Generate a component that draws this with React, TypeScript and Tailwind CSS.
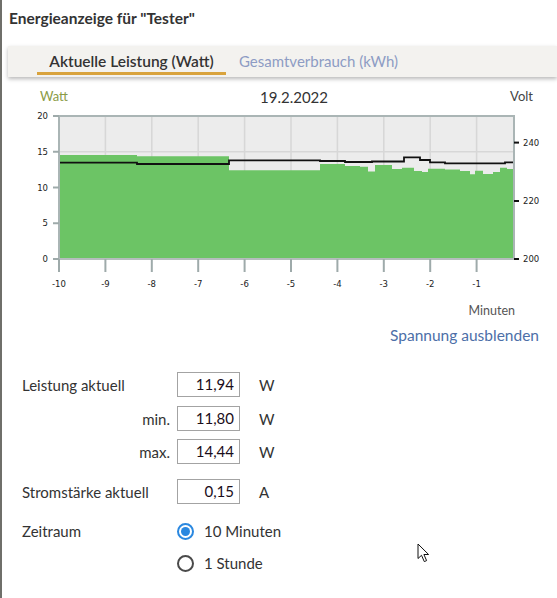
import React from "react";

const L = 59;
const R = 514;
const T = 116;
const B = 259;
const STEP = 46.4;

// power bars: [x0, x1, top]
const power: [number, number, number][] = [
  [59, 137, 155],
  [137, 229, 156.3],
  [229, 320, 170.3],
  [320, 345, 164],
  [345, 360, 166],
  [360, 368, 166.7],
  [368, 375, 171.5],
  [375, 392, 165],
  [392, 402, 169],
  [402, 414, 167.7],
  [414, 422, 171],
  [422, 428, 172],
  [428, 445, 168.7],
  [445, 460, 169.5],
  [460, 470, 171],
  [470, 475, 174.3],
  [475, 483, 170.7],
  [483, 493, 174],
  [493, 500, 172],
  [500, 507, 167.7],
  [507, 514, 169],
];

// voltage steps: [x0, x1, y]
const volt: [number, number, number][] = [
  [59, 137, 162.7],
  [137, 229, 164],
  [229, 320, 160.3],
  [320, 345, 161],
  [345, 372, 162],
  [372, 404, 161.5],
  [404, 420, 157.3],
  [420, 430, 160],
  [430, 445, 162.3],
  [445, 505, 163.3],
  [505, 514, 162.4],
];

function areaPath() {
  let d = `M${L},${B}`;
  for (const [x0, x1, y] of power) d += ` L${x0},${y} L${x1},${y}`;
  d += ` L${R},${B} Z`;
  return d;
}

function linePath() {
  let d = "";
  volt.forEach(([x0, x1, y], i) => {
    d += i === 0 ? `M${x0},${y}` : ` L${x0},${y}`;
    d += ` L${x1},${y}`;
  });
  return d;
}

function Chart() {
  const xs = Array.from({ length: 10 }, (_, i) => L + i * STEP);
  const leftTicks = [
    { v: "20", y: T },
    { v: "15", y: 151.75 },
    { v: "10", y: 187.5 },
    { v: "5", y: 223.25 },
    { v: "0", y: B },
  ];
  const rightTicks = [
    { v: "240", y: 142.6 },
    { v: "220", y: 201 },
    { v: "200", y: B },
  ];
  return (
    <svg width={557} height={194} className="block -ml-[2px]">
      <g transform="translate(0,-107)" fontFamily="'DejaVu Sans', sans-serif" fontSize="8.5">
        <rect x={L} y={T} width={R - L} height={B - T} fill="#ececec" />
        {xs.slice(1).map((x) => (
          <line key={x} x1={x} y1={T} x2={x} y2={B} stroke="#d7d7d7" strokeWidth={1.5} />
        ))}
        <line x1={L} y1={151.75} x2={R} y2={151.75} stroke="#d7d7d7" strokeWidth={1.5} />
        <path d={areaPath()} fill="#6cc465" />
        <path d={linePath()} fill="none" stroke="#111" strokeWidth={1.8} />
        {/* frame */}
        <rect x={L} y={T} width={R - L} height={B - T} fill="none" stroke="#aab5b5" strokeWidth={2} />
        <line x1={L} y1={B} x2={R} y2={B} stroke="#b8c1c1" strokeWidth={1.5} />
        {/* x ticks */}
        {xs.map((x, i) => (
          <g key={i}>
            <line x1={x} y1={B} x2={x} y2={272} stroke="#9eaaaa" strokeWidth={2} />
            <text x={x} y={287} textAnchor="middle" fill="#222">
              {String(i - 10)}
            </text>
          </g>
        ))}
        {/* left axis */}
        {leftTicks.map((t) => (
          <g key={t.v}>
            <line x1={53} y1={t.y} x2={L} y2={t.y} stroke="#9eaaaa" strokeWidth={2} />
            <text x={48} y={t.y + 3} textAnchor="end" fill="#222">
              {t.v}
            </text>
          </g>
        ))}
        {/* right axis */}
        {rightTicks.map((t) => (
          <g key={t.v}>
            <line x1={R} y1={t.y} x2={519} y2={t.y} stroke="#111" strokeWidth={2} />
            <text x={523} y={t.y + 3} fill="#222">
              {t.v}
            </text>
          </g>
        ))}
      </g>
    </svg>
  );
}

function Field({ label, value, unit, right, className }: { label: string; value: string; unit: string; right?: boolean; className?: string }) {
  return (
    <div className={`flex items-center h-[25px] ${className ?? ""}`}>
      <div className={`w-[155px] pr-[7px] pt-[1px] ${right ? "text-right" : ""} text-[15px] text-[#333]`}>{label}</div>
      <div className="w-[63px] h-[25px] border border-[#a3a3a3] flex items-center justify-end pr-[5px] text-[15px] text-[#1a0d1a]">
        {value}
      </div>
      <div className="ml-[19px] pt-[1px] text-[15px] text-[#333]">{unit}</div>
    </div>
  );
}

function Radio({ checked, label, className }: { checked?: boolean; label: string; className?: string }) {
  return (
    <div className={`flex items-center h-[20px] ${className ?? ""}`}>
      {checked ? (
        <span className="w-[17px] h-[17px] rounded-full border-2 border-[#2a88e0] flex items-center justify-center">
          <span className="w-[9px] h-[9px] rounded-full bg-[#2a88e0]" />
        </span>
      ) : (
        <span className="w-[17px] h-[17px] rounded-full border-2 border-[#4a4a4a]" />
      )}
      <span className="ml-[10px] text-[15px] text-[#333]">{label}</span>
    </div>
  );
}

export default function App() {
  return (
    <div className="relative w-[557px] h-[598px] overflow-hidden bg-white font-[Lato,sans-serif] border-l-2 border-[#6f6f6a]">
      <div className="pl-[7px] pt-[7px] h-[46px] text-[15.5px] font-bold text-[#333]">Energieanzeige für "Tester"</div>

      {/* tabs */}
      <div className="ml-[6px] h-[31px] bg-[#f3f2ef] shadow-[0_2px_4px_rgba(0,0,0,0.28)] flex items-stretch">
        <div className="ml-[29px] w-[189px] relative flex items-center justify-center text-[15.5px] font-semibold text-[#333]">
          Aktuelle Leistung (Watt)
          <span className="absolute left-0 right-0 bottom-[2px] h-[3px] bg-[#d9a33d]" />
        </div>
        <div className="ml-[13px] flex items-center text-[15px] text-[#8d9cc4]">Gesamtverbrauch (kWh)</div>
      </div>

      {/* chart header */}
      <div className="mt-[10px] h-[20px] flex items-center justify-between pl-[38px] pr-[24px]">
        <span className="text-[13px] text-[#8b9b45]">Watt</span>
        <span className="text-[15px] text-[#333] ml-[10px]">19.2.2022</span>
        <span className="text-[13px] text-[#444]">Volt</span>
      </div>

      <Chart />

      <div className="h-[25px] pt-[1px] flex items-start justify-end pr-[42px] text-[12.5px] text-[#555]">Minuten</div>
      <div className="h-[20px] flex items-center justify-end pr-[18px] text-[15.5px] text-[#4d6fa8]">Spannung ausblenden</div>

      {/* values */}
      <div className="mt-[26px] pl-[20px]">
        <Field label="Leistung aktuell" value="11,94" unit="W" />
        <Field label="min." value="11,80" unit="W" right className="mt-[9px]" />
        <Field label="max." value="14,44" unit="W" right className="mt-[8px]" />
        <Field label="Stromstärke aktuell" value="0,15" unit="A" className="mt-[15px]" />

        <div className="mt-[17px] flex items-center h-[20px]">
          <div className="w-[155px] text-[15px] text-[#333]">Zeitraum</div>
          <Radio checked label="10 Minuten" />
        </div>
        <div className="mt-[12px] flex items-center h-[20px]">
          <div className="w-[155px]" />
          <Radio label="1 Stunde" />
        </div>
      </div>

      {/* mouse pointer */}
      <svg className="absolute left-[415px] top-[543px]" width="14" height="20" viewBox="0 0 14 20">
        <path d="M1 1 L1 15.5 L4.5 12.3 L7.3 18.6 L9.6 17.6 L6.9 11.5 L11.6 11.5 Z" fill="#fff" stroke="#111" strokeWidth="1" strokeLinejoin="round" />
      </svg>
    </div>
  );
}
